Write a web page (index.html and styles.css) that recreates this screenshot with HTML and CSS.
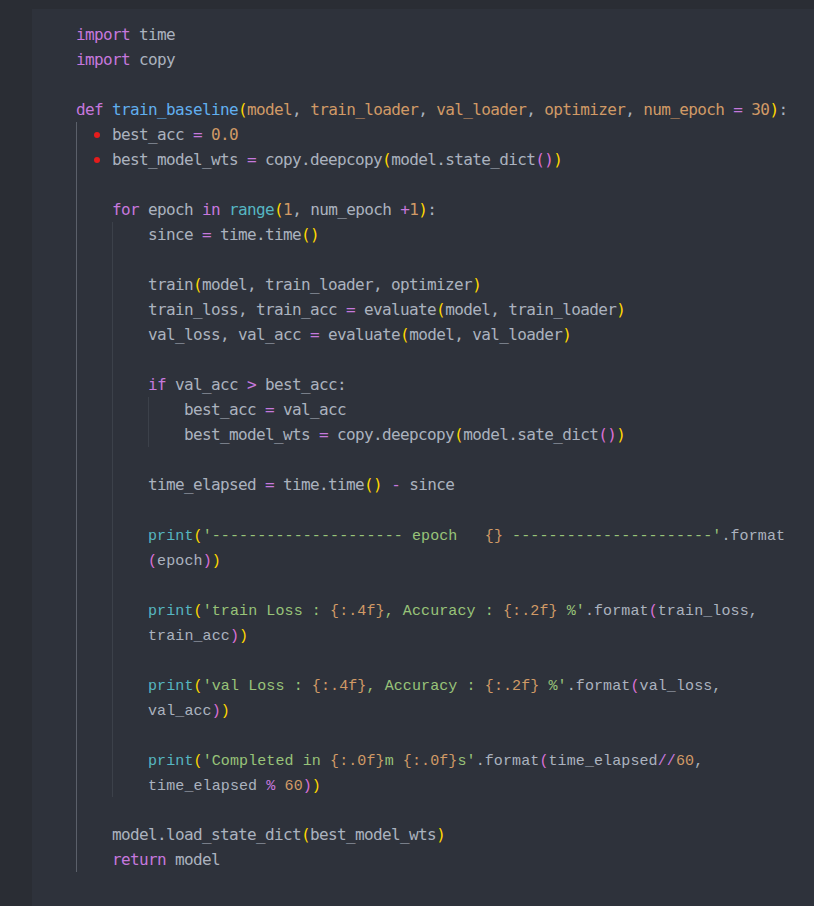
FILE: index.html
```html
<!DOCTYPE html>
<html>
<head>
<meta charset="utf-8">
<link rel="stylesheet" href="styles.css">
</head>
<body>
<div class="panel">
  <div class="code">
    <div class="ln"><span class="k">import</span> time</div>
    <div class="ln"><span class="k">import</span> copy</div>
    <div class="ln"></div>
    <div class="ln"><span class="k">def</span> <span class="f">train_baseline</span><span class="b1">(</span><span class="p">model</span>, <span class="p">train_loader</span>, <span class="p">val_loader</span>, <span class="p">optimizer</span>, <span class="p">num_epoch</span> <span class="o">=</span> <span class="n">30</span><span class="b1">)</span>:</div>
    <div class="block guide-on">
      <div class="ln dot">best_acc <span class="o">=</span> <span class="n">0.0</span></div>
      <div class="ln dot">best_model_wts <span class="o">=</span> copy.deepcopy<span class="b1">(</span>model.state_dict<span class="b2">()</span><span class="b1">)</span></div>
      <div class="ln"></div>
      <div class="ln"><span class="k">for</span> epoch <span class="k">in</span> <span class="c">range</span><span class="b1">(</span><span class="n">1</span>, num_epoch <span class="o">+</span><span class="n">1</span><span class="b1">)</span>:</div>
      <div class="block">
        <div class="ln">since <span class="o">=</span> time.time<span class="b1">()</span></div>
        <div class="ln"></div>
        <div class="ln">train<span class="b1">(</span>model, train_loader, optimizer<span class="b1">)</span></div>
        <div class="ln">train_loss, train_acc <span class="o">=</span> evaluate<span class="b1">(</span>model, train_loader<span class="b1">)</span></div>
        <div class="ln">val_loss, val_acc <span class="o">=</span> evaluate<span class="b1">(</span>model, val_loader<span class="b1">)</span></div>
        <div class="ln"></div>
        <div class="ln"><span class="k">if</span> val_acc <span class="o">&gt;</span> best_acc:</div>
        <div class="block">
          <div class="ln">best_acc <span class="o">=</span> val_acc</div>
          <div class="ln">best_model_wts <span class="o">=</span> copy.deepcopy<span class="b1">(</span>model.sate_dict<span class="b2">()</span><span class="b1">)</span></div>
        </div>
        <div class="ln"></div>
        <div class="ln">time_elapsed <span class="o">=</span> time.time<span class="b1">()</span> <span class="o">-</span> since</div>
        <div class="ln"></div>
        <div class="ln narrow"><span class="c">print</span><span class="b1">(</span><span class="s">'--------------------- epoch   </span><span class="n">{}</span><span class="s"> ----------------------'</span>.format</div>
        <div class="ln narrow"><span class="b2">(</span>epoch<span class="b2">)</span><span class="b1">)</span></div>
        <div class="ln"></div>
        <div class="ln narrow"><span class="c">print</span><span class="b1">(</span><span class="s">'train Loss : </span><span class="n">{:.4f}</span><span class="s">, Accuracy : </span><span class="n">{:.2f}</span><span class="s"> %'</span>.format<span class="b2">(</span>train_loss,</div>
        <div class="ln narrow">train_acc<span class="b2">)</span><span class="b1">)</span></div>
        <div class="ln"></div>
        <div class="ln narrow"><span class="c">print</span><span class="b1">(</span><span class="s">'val Loss : </span><span class="n">{:.4f}</span><span class="s">, Accuracy : </span><span class="n">{:.2f}</span><span class="s"> %'</span>.format<span class="b2">(</span>val_loss,</div>
        <div class="ln narrow">val_acc<span class="b2">)</span><span class="b1">)</span></div>
        <div class="ln"></div>
        <div class="ln narrow"><span class="c">print</span><span class="b1">(</span><span class="s">'Completed in </span><span class="n">{:.0f}</span><span class="s">m </span><span class="n">{:.0f}</span><span class="s">s'</span>.format<span class="b2">(</span>time_elapsed<span class="o">//</span><span class="n">60</span>,</div>
        <div class="ln narrow">time_elapsed <span class="o">%</span> <span class="n">60</span><span class="b2">)</span><span class="b1">)</span></div>
      </div>
      <div class="ln"></div>
      <div class="ln">model.load_state_dict<span class="b1">(</span>best_model_wts<span class="b1">)</span></div>
      <div class="ln"><span class="k">return</span> model</div>
    </div>
  </div>
</div>
</body>
</html>
```
FILE: styles.css
```css
html, body {
  margin: 0;
  padding: 0;
  background: #2a2d34;
  height: 100%;
  overflow: hidden;
}
.panel {
  margin: 9px 0 0 32px;
  background: #2e323b;
  height: 897px;
  padding: 13px 0 0 44px;
  box-sizing: border-box;
}
.code {
  font-family: "DejaVu Sans Mono", monospace;
  font-size: 16px;
  letter-spacing: -0.63px;
  color: #abb2bf;
}
.ln {
  height: 25px;
  line-height: 25px;
  position: relative;
  white-space: pre;
}
.block {
  border-left: 1px solid #3c414a;
  padding-left: 35px;
}
.guide-on {
  border-left-color: #5b606a;
}
.dot::before {
  content: "";
  position: absolute;
  left: -18px;
  top: 10px;
  width: 6px;
  height: 6px;
  border-radius: 50%;
  background: #e51c1c;
}
.narrow {
  font-family: "Liberation Mono", monospace;
  font-size: 15px;
  letter-spacing: 0.1px;
  line-height: 29px;
}
.k { color: #c678dd; }
.f { color: #61afef; }
.p { color: #d19a66; }
.o { color: #c678dd; }
.n { color: #d19a66; }
.s { color: #98c379; }
.c { color: #56b6c2; }
.b1 { color: #ffd700; }
.b2 { color: #da70d6; }
.b3 { color: #179fff; }
```
